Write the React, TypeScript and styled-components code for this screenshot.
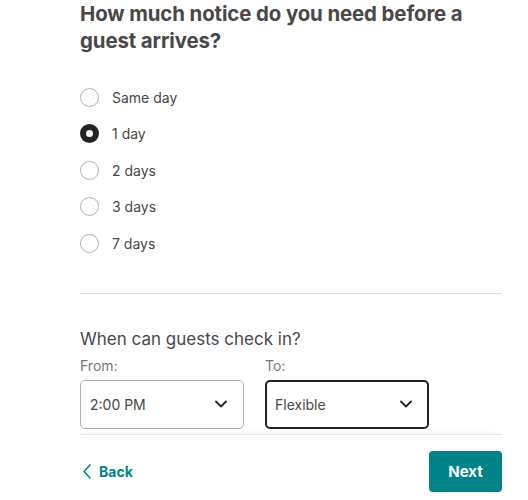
import React from "react";
import styled, { createGlobalStyle } from "styled-components";

const Global = createGlobalStyle`
  html, body { margin: 0; padding: 0; background: #fff; }
  body { font-family: Inter, "Open Sans", sans-serif; color: #484848; }
`;

const Page = styled.div`
  width: 528px;
  height: 500px;
  padding: 0 26px 0 80px;
  box-sizing: border-box;
  display: flex;
  flex-direction: column;
  overflow: hidden;
`;

const Title = styled.h1`
  margin: 0;
  font-size: 20.4px;
  line-height: 27px;
  font-weight: 700;
  color: #484848;
  letter-spacing: -0.1px;
`;

const RadioList = styled.div`
  margin-top: 25px;
  display: flex;
  flex-direction: column;
`;

const RadioRow = styled.label`
  height: 36.5px;
  display: flex;
  align-items: center;
  gap: 13px;
  font-size: 14px;
  color: #484848;
`;

const Circle = styled.span<{ $on?: boolean }>`
  width: 19px;
  height: 19px;
  box-sizing: border-box;
  border-radius: 50%;
  background: #fff;
  border: ${(p) => (p.$on ? "6px solid #222" : "1px solid #b0b0b0")};
  flex: none;
`;

const Divider = styled.hr`
  border: 0;
  border-top: 1px solid #dcdcdc;
  margin: 31px 0 0;
`;

const SubTitle = styled.h2`
  margin: 33px 0 0;
  font-size: 17px;
  line-height: 24px;
  font-weight: 400;
  color: #484848;
`;

const Fields = styled.div`
  display: flex;
  gap: 21px;
  margin-top: 5px;
`;

const Field = styled.div`
  display: flex;
  flex-direction: column;
  gap: 4px;
  width: 164px;
`;

const Label = styled.span`
  font-size: 14px;
  line-height: 20px;
  color: #767676;
`;

const Select = styled.div<{ $focus?: boolean }>`
  height: 49px;
  box-sizing: border-box;
  border-radius: 5px;
  border: ${(p) => (p.$focus ? "2px solid #222" : "1px solid #b0b0b0")};
  display: flex;
  align-items: center;
  justify-content: space-between;
  padding: 0 ${(p) => (p.$focus ? "15px 0 8px" : "16px 0 9px")};
  font-size: 14px;
  color: #484848;
`;

const Footer = styled.div`
  margin-top: 5px;
  border-top: 1px solid #e4e4e4;
  box-shadow: 0 -4px 6px -4px rgba(0, 0, 0, 0.06);
  padding-top: 16px;
  display: flex;
  justify-content: space-between;
  align-items: center;
`;

const BackLink = styled.a`
  display: flex;
  align-items: center;
  gap: 8px;
  color: #008489;
  font-weight: 700;
  font-size: 14px;
  padding-left: 3px;
  text-decoration: none;
`;

const NextButton = styled.button`
  width: 73px;
  height: 41px;
  border: 0;
  border-radius: 4px;
  background: #008489;
  color: #fff;
  font-family: inherit;
  font-weight: 700;
  font-size: 15px;
`;

const Chevron = () => (
  <svg width="12" height="8" viewBox="0 0 12 8" fill="none">
    <path d="M1 1.5l5 5 5-5" stroke="#222" strokeWidth="1.8" strokeLinecap="round" strokeLinejoin="round" />
  </svg>
);

const BackChevron = () => (
  <svg width="8" height="15" viewBox="0 0 8 15" fill="none">
    <path d="M7 1L1 7.5 7 14" stroke="#008489" strokeWidth="1.6" strokeLinecap="round" strokeLinejoin="round" />
  </svg>
);

const options = ["Same day", "1 day", "2 days", "3 days", "7 days"];

export default function App() {
  return (
    <>
      <Global />
      <Page>
        <Title>How much notice do you need before a guest arrives?</Title>
        <RadioList>
          {options.map((o, i) => (
            <RadioRow key={o}>
              <Circle $on={i === 1} />
              {o}
            </RadioRow>
          ))}
        </RadioList>
        <Divider />
        <SubTitle>When can guests check in?</SubTitle>
        <Fields>
          <Field>
            <Label>From:</Label>
            <Select>
              2:00 PM
              <Chevron />
            </Select>
          </Field>
          <Field>
            <Label>To:</Label>
            <Select $focus>
              Flexible
              <Chevron />
            </Select>
          </Field>
        </Fields>
        <Footer>
          <BackLink>
            <BackChevron />
            Back
          </BackLink>
          <NextButton>Next</NextButton>
        </Footer>
      </Page>
    </>
  );
}
